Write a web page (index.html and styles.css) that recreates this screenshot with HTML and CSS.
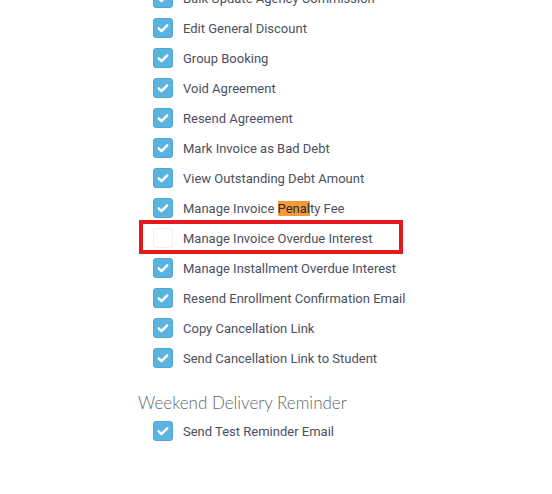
FILE: index.html
```html
<!DOCTYPE html>
<html lang="en">
<head>
    <meta charset="UTF-8">
    <meta name="viewport" content="width=device-width, initial-scale=1.0">
    <title>Permissions</title>
    <link rel="stylesheet" href="styles.css">
</head>
<body>
    <div class="permissions">
        <ul class="perm-list">
            <li class="perm-row"><span class="check on"></span><span class="label">Bulk Update Agency Commission</span></li>
            <li class="perm-row"><span class="check on"></span><span class="label">Edit General Discount</span></li>
            <li class="perm-row"><span class="check on"></span><span class="label">Group Booking</span></li>
            <li class="perm-row"><span class="check on"></span><span class="label">Void Agreement</span></li>
            <li class="perm-row"><span class="check on"></span><span class="label">Resend Agreement</span></li>
            <li class="perm-row"><span class="check on"></span><span class="label">Mark Invoice as Bad Debt</span></li>
            <li class="perm-row"><span class="check on"></span><span class="label">View Outstanding Debt Amount</span></li>
            <li class="perm-row"><span class="check on"></span><span class="label">Manage Invoice <mark class="hit">Penal</mark>ty Fee</span></li>
            <li class="perm-row"><span class="check"></span><span class="label">Manage Invoice Overdue Interest</span><span class="flag-box"></span></li>
            <li class="perm-row"><span class="check on"></span><span class="label">Manage Installment Overdue Interest</span></li>
            <li class="perm-row"><span class="check on"></span><span class="label">Resend Enrollment Confirmation Email</span></li>
            <li class="perm-row"><span class="check on"></span><span class="label">Copy Cancellation Link</span></li>
            <li class="perm-row"><span class="check on"></span><span class="label">Send Cancellation Link to Student</span></li>
        </ul>

        <h3 class="group-title">Weekend Delivery Reminder</h3>
        <ul class="perm-list">
            <li class="perm-row"><span class="check on"></span><span class="label">Send Test Reminder Email</span></li>
        </ul>
    </div>
</body>
</html>
```

FILE: styles.css
```css
* {
    margin: 0;
    padding: 0;
    box-sizing: border-box;
}

body {
    background: #fff;
    font-family: Roboto, 'Liberation Sans', sans-serif;
    overflow: hidden;
}

.permissions {
    margin-top: -17px;
    padding-left: 138px;
}

.perm-list {
    list-style: none;
    padding-left: 15px;
}

.perm-row {
    position: relative;
    height: 30px;
    display: flex;
    align-items: center;
    font-size: 13px;
    color: #4b5060;
}

.label {
    white-space: nowrap;
}

.check {
    width: 20px;
    height: 20px;
    margin-right: 10px;
    border-radius: 3px;
    border: 1px solid #eef0f3;
    background: #fff;
    flex-shrink: 0;
}

.check.on {
    border-color: #4fa7d4;
    background: #5bb4e0 url("data:image/svg+xml,%3Csvg xmlns='http://www.w3.org/2000/svg' viewBox='0 0 20 20'%3E%3Cpath d='M5.2 10.4l3.1 3 6.4-6.4' fill='none' stroke='white' stroke-width='2.6' stroke-linecap='round' stroke-linejoin='round'/%3E%3C/svg%3E") center / 18px 18px no-repeat;
}

.hit {
    background: #f39a3a;
    color: #2b2b2b;
}

/* red frame drawn around the unchecked permission */
.flag-box {
    position: absolute;
    left: -14px;
    top: -3px;
    width: 264px;
    height: 34px;
    border: 4px solid #e3191b;
    pointer-events: none;
}

.group-title {
    margin-top: 18px;
    margin-bottom: 1px;
    font-family: Lato, sans-serif;
    font-weight: 300;
    font-size: 17px;
    line-height: 24px;
    color: #62666f;
}
```
